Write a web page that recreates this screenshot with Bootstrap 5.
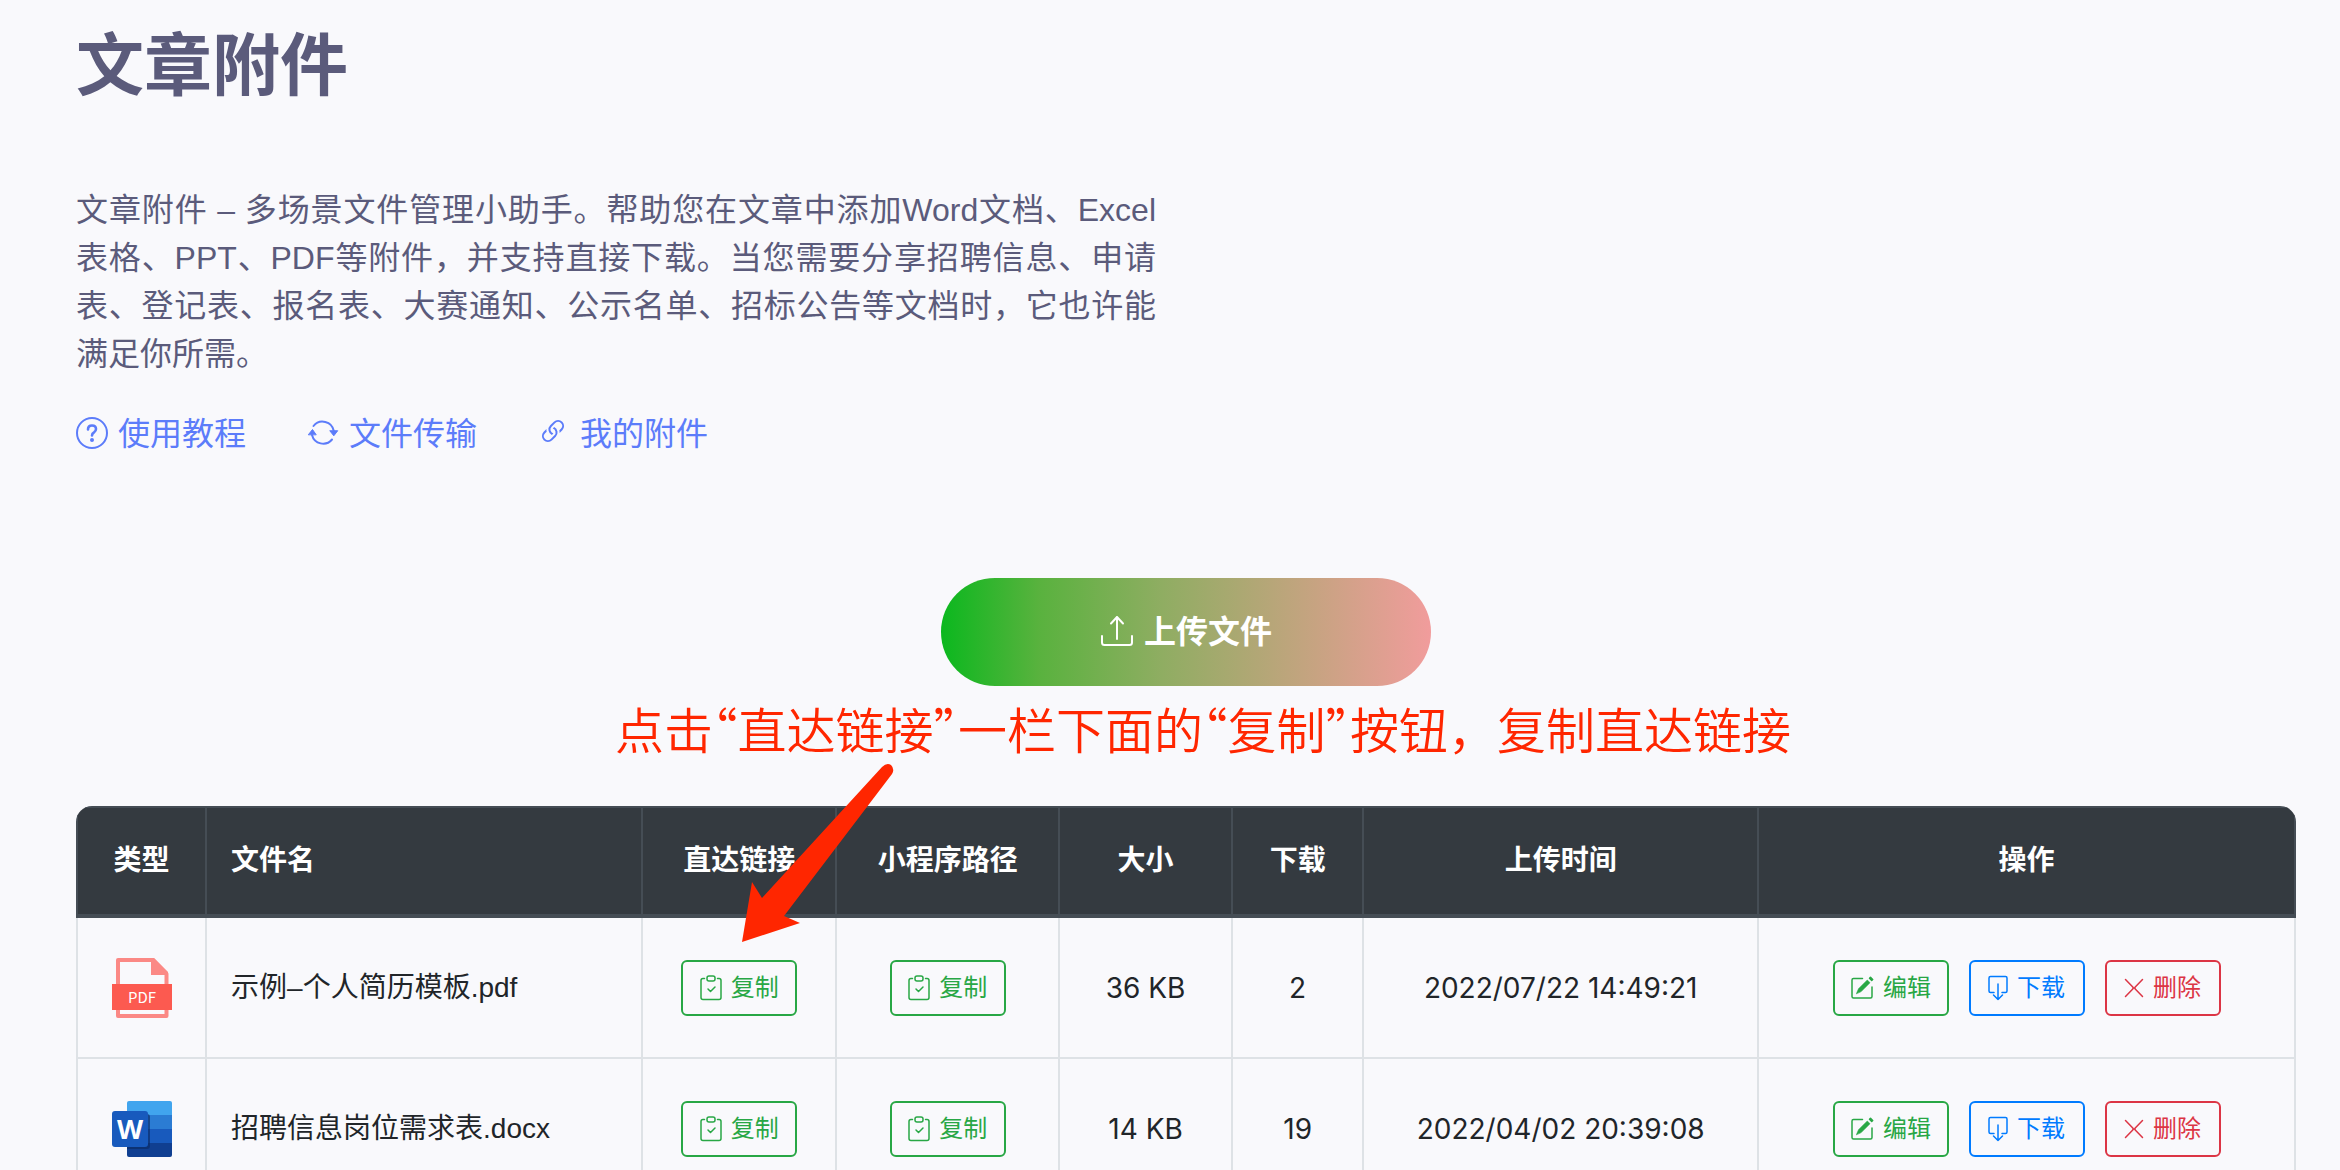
<!DOCTYPE html>
<html lang="zh-CN">
<head>
<meta charset="utf-8">
<meta name="viewport" content="width=device-width, initial-scale=1">
<title>文章附件</title>
<link rel="stylesheet" href="https://cdn.jsdelivr.net/npm/bootstrap@5.3.0/dist/css/bootstrap.min.css">
<style>
:root { --ink: #5b5b7b; --brand: #5c7cfa; --line: #dee2e6; --head: #343a40; --head-line: #454d55; }
body { background: #f9f9fc; color: #212529; font-family: "Liberation Sans", "Noto Sans CJK SC", sans-serif; }
.page { padding: 16px 44px 0 76px; }
.page-title { font-size: 68px; line-height: 100px; font-weight: 700; color: var(--ink); }
.intro { max-width: 1080px; margin-top: 70px; font-size: 32px; line-height: 48px; color: var(--ink); text-align: justify; }
.quick { margin-top: 32px; gap: 61px; font-size: 32px; line-height: 48px; }
.quick a { color: var(--brand); gap: 10px; }
.icon { fill: none; stroke: currentColor; stroke-width: 1.5; stroke-linecap: round; stroke-linejoin: round; flex: none; }
.quick .icon, .upload .icon { stroke-width: 2; }
.upload { width: 490px; height: 108px; margin-top: 120px; border: 0; font-size: 32px; color: #fff; gap: 10px; background: linear-gradient(to right, #0bb81e, #59b23e 20%, #8fad62 45%, #c8a382 77%, #f19c9c); }
.upload:hover { color: #fff; }
.files-wrap { margin-top: 120px; border-radius: 16px 16px 0 0; overflow: hidden; }
.files { table-layout: fixed; border-collapse: collapse; font-size: 28px; line-height: 42px; text-align: center; --bs-table-bg: transparent; }
.files th, .files td { border: 2px solid var(--line); padding: 20px 24px; vertical-align: middle; }
.files tbody td { height: 142px; color: #212529; }
.files thead th { height: 109px; background: var(--head); color: #fff; border-color: var(--head-line); border-bottom-width: 4px; white-space: nowrap; }
.files .fname { text-align: left; }
.files .num { font-family: Inter, sans-serif; padding: 0; white-space: nowrap; }
.files .btn { width: 116px; height: 56px; padding: 0; border-width: 2px; border-radius: 6px; font-size: 24px; line-height: 36px; gap: 9px; white-space: nowrap; display: flex; align-items: center; justify-content: center; }
.act { gap: 20px; }
.b-green { --bs-btn-color: #28a745; --bs-btn-border-color: #28a745; --bs-btn-hover-bg: #28a745; --bs-btn-hover-color: #fff; }
.b-blue { --bs-btn-color: #007bff; --bs-btn-border-color: #007bff; --bs-btn-hover-bg: #007bff; --bs-btn-hover-color: #fff; }
.b-red { --bs-btn-color: #dc3545; --bs-btn-border-color: #dc3545; --bs-btn-hover-bg: #dc3545; --bs-btn-hover-color: #fff; }
.stage { position: relative; }
.tip { position: absolute; left: 50%; top: 114px; transform: translateX(-50%); margin-left: 17px; font-family: "Noto Sans CJK SC", sans-serif; font-size: 49px; line-height: 72px; font-weight: 350; color: #ff2600; white-space: nowrap; }
.tip i { font-style: normal; font-feature-settings: "halt"; }
.pointer { position: absolute; left: 666px; top: 184px; }
</style>
</head>
<body>
<svg class="d-none" xmlns="http://www.w3.org/2000/svg">
  <symbol id="i-copy" viewBox="0 0 22 26"><path d="M4.500 3.500H3Q1 3.500 1 5.500V22.500Q1 24.500 3 24.500H19Q21 24.500 21 22.500V5.500Q21 3.500 19 3.500H17.500"/><rect x="7" y="1" width="8" height="5" rx="2"/><path d="M8 14l2.500 2.500 4.500-4.500"/></symbol>
  <symbol id="i-edit" viewBox="0 0 24 24"><path d="M12.500 2.500H3.500Q2 2.500 2 4V20.500Q2 22 3.500 22H20.500Q22 22 22 20.500V11"/><path d="M6.500 17.500L8.500 12.800 17.300 4 20 6.700 11.200 15.500Z" fill="currentColor" stroke-width=".6"/><path d="M19.500 2.300L20.500 1.300 22.700 3.500 21.700 4.500Z" fill="currentColor"/></symbol>
  <symbol id="i-down" viewBox="0 0 20 26"><path d="M6 17.500H2.500Q1 17.500 1 16V3Q1 1.500 2.500 1.500H17.500Q19 1.500 19 3V16Q19 17.500 17.500 17.500H14M10 9V24.500M5.500 20L10 24.500 14.500 20"/></symbol>
  <symbol id="i-del" viewBox="0 0 20 20"><path d="M1.500 1.500L9 9.300V10.700L1.500 18.500M18.500 1.500L11 9.300V10.700L18.500 18.500M9 10H11"/></symbol>
</svg>

<main class="page vh-100 overflow-hidden">
  <h1 class="page-title mb-0">文章附件</h1>
  <p class="intro mb-0">文章附件 – 多场景文件管理小助手。帮助您在文章中添加Word文档、Excel表格、PPT、PDF等附件，并支持直接下载。当您需要分享招聘信息、申请表、登记表、报名表、大赛通知、公示名单、招标公告等文档时，它也许能满足你所需。</p>
  <nav class="quick d-flex flex-wrap">
    <a class="d-flex align-items-center text-decoration-none" href="#help">
      <svg class="icon" width="32" height="34" viewBox="0 0 32 34"><circle cx="16" cy="16" r="15"/><path d="M12 12.500Q12 8.500 16 8.500 20 8.500 20 12 20 14 18 15.300 16 16.500 16 18.500" stroke-width="2.600"/><circle cx="16" cy="23" r="1" fill="currentColor"/></svg>使用教程</a>
    <a class="d-flex align-items-center text-decoration-none" href="#transfer">
      <svg class="icon" width="32" height="34" viewBox="0 0 32 34"><path d="M5 18A11.500 11.500 0 0 0 25 22.500M26.800 14A11.500 11.500 0 0 0 6.500 9"/><path d="M1.500 17.500L5.500 12.500 9 17.500ZM23 14L26.800 18.800 30.500 14Z" fill="currentColor" stroke-width="1"/></svg>文件传输</a>
    <a class="d-flex align-items-center text-decoration-none" href="#mine">
      <svg class="icon" width="32" height="34" viewBox="0 0 32 34"><g transform="translate(-1 -1) scale(2)" fill="currentColor" stroke="none"><path d="M4.715 6.542 3.343 7.914a3 3 0 1 0 4.243 4.243l1.828-1.829A3 3 0 0 0 8.586 5.500L8 6.086a1.002 1.002 0 0 0-.154.199 2 2 0 0 1 .861 3.337L6.880 11.450a2 2 0 1 1-2.830-2.830l.793-.792a4.018 4.018 0 0 1-.128-1.287z"/><path d="M6.586 4.672A3 3 0 0 0 7.414 9.500l.775-.776a2 2 0 0 1-.896-3.346L9.120 3.550a2 2 0 1 1 2.830 2.830l-.793.792c.112.420.155.855.128 1.287l1.372-1.372a3 3 0 1 0-4.243-4.243L6.586 4.672z"/></g></svg>我的附件</a>
  </nav>

  <div class="stage">
    <button type="button" class="upload btn rounded-pill fw-bold d-flex align-items-center justify-content-center mx-auto">
      <svg class="icon" width="34" height="34" viewBox="0 0 34 34"><path d="M2 21V27.500Q2 30 4.500 30H29.500Q32 30 32 27.500V21M17 24V2M11 8.500L17 2 23 8.500"/></svg>上传文件</button>
    <div class="tip">点击<i>“</i>直达链接<i>”</i>一栏下面的<i>“</i>复制<i>”</i>按钮，复制直达链接</div>

    <div class="files-wrap">
      <table class="files table mb-0">
        <colgroup><col style="width:5.82%"><col style="width:19.66%"><col style="width:8.75%"><col style="width:10.05%"><col style="width:7.80%"><col style="width:5.91%"><col style="width:17.81%"><col style="width:24.20%"></colgroup>
        <thead><tr><th scope="col">类型</th><th scope="col" class="fname">文件名</th><th scope="col">直达链接</th><th scope="col">小程序路径</th><th scope="col">大小</th><th scope="col">下载</th><th scope="col">上传时间</th><th scope="col">操作</th></tr></thead>
        <tbody>
          <tr>
            <td><svg class="d-block mx-auto" width="60" height="60" viewBox="0 0 60 60" role="img" aria-label="PDF"><path d="M6 2H41L54.500 16V58H6Z" fill="none" stroke="#fb8985" stroke-width="4" stroke-linejoin="round"/><path d="M39 0H42L56 14V17H39Z" fill="#fb8985"/><path d="M0 26H60V52H0Z" fill="#fc5a50"/><text x="30" y="45" text-anchor="middle" font-family="Noto Sans CJK SC" font-size="15" fill="#fff">PDF</text></svg></td>
            <td class="fname">示例–个人简历模板.pdf</td>
            <td><button type="button" class="btn b-green mx-auto"><svg class="icon" width="22" height="26"><use href="#i-copy"/></svg>复制</button></td>
            <td><button type="button" class="btn b-green mx-auto"><svg class="icon" width="22" height="26"><use href="#i-copy"/></svg>复制</button></td>
            <td class="num">36 KB</td><td class="num">2</td><td class="num">2022/07/22 14:49:21</td>
            <td><div class="act d-flex justify-content-center">
              <button type="button" class="btn b-green"><svg class="icon" width="24" height="24"><use href="#i-edit"/></svg>编辑</button>
              <button type="button" class="btn b-blue"><svg class="icon" width="20" height="26"><use href="#i-down"/></svg>下载</button>
              <button type="button" class="btn b-red"><svg class="icon" width="20" height="20"><use href="#i-del"/></svg>删除</button></div></td>
          </tr>
          <tr>
            <td><svg class="d-block mx-auto" width="60" height="56" viewBox="0 0 60 56" role="img" aria-label="Word"><path d="M15 14V2Q15 0 17 0H58Q60 0 60 2V14Z" fill="#41a5ee"/><path d="M15 14H60V28H15Z" fill="#2b7cd3"/><path d="M15 28H60V42H15Z" fill="#185abd"/><path d="M15 42H60V54Q60 56 58 56H17Q15 56 15 54Z" fill="#103f91"/><path d="M15 13H35Q38 13 38 16V45Q38 48 35 48H15Z" fill="#0b2b66" opacity=".65"/><rect y="10" width="36" height="36" rx="3" fill="#185abd"/><text x="18" y="38" text-anchor="middle" font-family="Open Sans" font-weight="700" font-size="27" fill="#fff">W</text></svg></td>
            <td class="fname">招聘信息岗位需求表.docx</td>
            <td><button type="button" class="btn b-green mx-auto"><svg class="icon" width="22" height="26"><use href="#i-copy"/></svg>复制</button></td>
            <td><button type="button" class="btn b-green mx-auto"><svg class="icon" width="22" height="26"><use href="#i-copy"/></svg>复制</button></td>
            <td class="num">14 KB</td><td class="num">19</td><td class="num">2022/04/02 20:39:08</td>
            <td><div class="act d-flex justify-content-center">
              <button type="button" class="btn b-green"><svg class="icon" width="24" height="24"><use href="#i-edit"/></svg>编辑</button>
              <button type="button" class="btn b-blue"><svg class="icon" width="20" height="26"><use href="#i-down"/></svg>下载</button>
              <button type="button" class="btn b-red"><svg class="icon" width="20" height="20"><use href="#i-del"/></svg>删除</button></div></td>
          </tr>
        </tbody>
      </table>
    </div>
    <svg class="pointer" width="160" height="184" viewBox="0 0 160 184" aria-hidden="true"><path fill="#ff2600" d="M0 180L10 120 20 136 140 5Q145 0 149 3 153 7 150 12L42 154 58 161Z"/></svg>
  </div>
</main>
<script src="https://cdn.jsdelivr.net/npm/bootstrap@5.3.0/dist/js/bootstrap.bundle.min.js"></script>
</body>
</html>
